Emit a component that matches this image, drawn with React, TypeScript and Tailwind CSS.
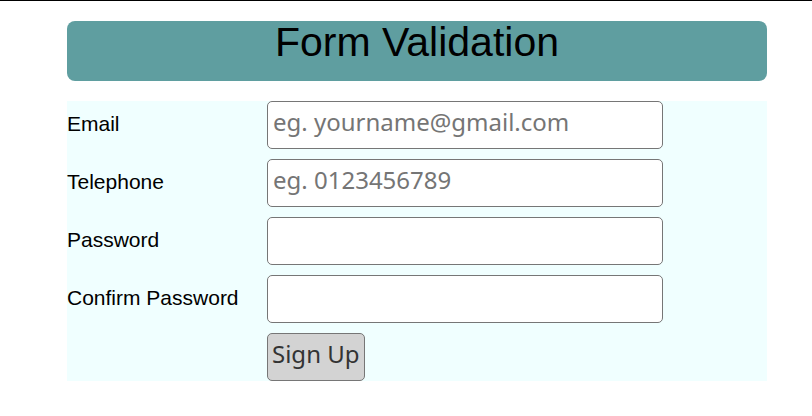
import type { InputHTMLAttributes } from "react";

type FieldProps = InputHTMLAttributes<HTMLInputElement> & { id: string; label: string };

function Field({ id, label, ...rest }: FieldProps) {
  return (
    <div className="flex items-center">
      <label htmlFor={id} className="w-[200px] shrink-0 pb-[2px] text-[21px] leading-7 text-black">
        {label}
      </label>
      <input
        id={id}
        className="h-12 w-[396px] min-w-0 rounded-[5px] border border-[#767676] bg-white px-[5px] pb-2 font-['Noto_Sans','Open_Sans',sans-serif] text-2xl text-black placeholder:text-[#757575]"
        {...rest}
      />
    </div>
  );
}

export default function App() {
  return (
    <div className="border-t border-black bg-white font-['Liberation_Sans',Arial,sans-serif]">
      <main className="ml-[67px] mr-[45px] flex max-w-[700px] flex-col gap-5 pt-5">
        <h1 className="h-[60px] rounded-lg bg-[#5f9ea0] text-center text-[41px] leading-[42px] text-black">
          Form Validation
        </h1>
        <form className="flex flex-col gap-[10px] bg-[#f0ffff]" onSubmit={(e) => e.preventDefault()}>
          <Field id="email" label="Email" type="email" placeholder="eg. yourname@gmail.com" />
          <Field id="telephone" label="Telephone" type="tel" placeholder="eg. 0123456789" />
          <Field id="password" label="Password" type="password" />
          <Field id="confirm" label="Confirm Password" type="password" />
          <button
            type="submit"
            className="ml-[200px] h-12 self-start rounded-[5px] border border-[#767676] bg-[#d3d3d3] px-1 pb-[6px] font-['Noto_Sans','Open_Sans',sans-serif] text-2xl text-[#333333]"
          >
            Sign Up
          </button>
        </form>
      </main>
    </div>
  );
}
